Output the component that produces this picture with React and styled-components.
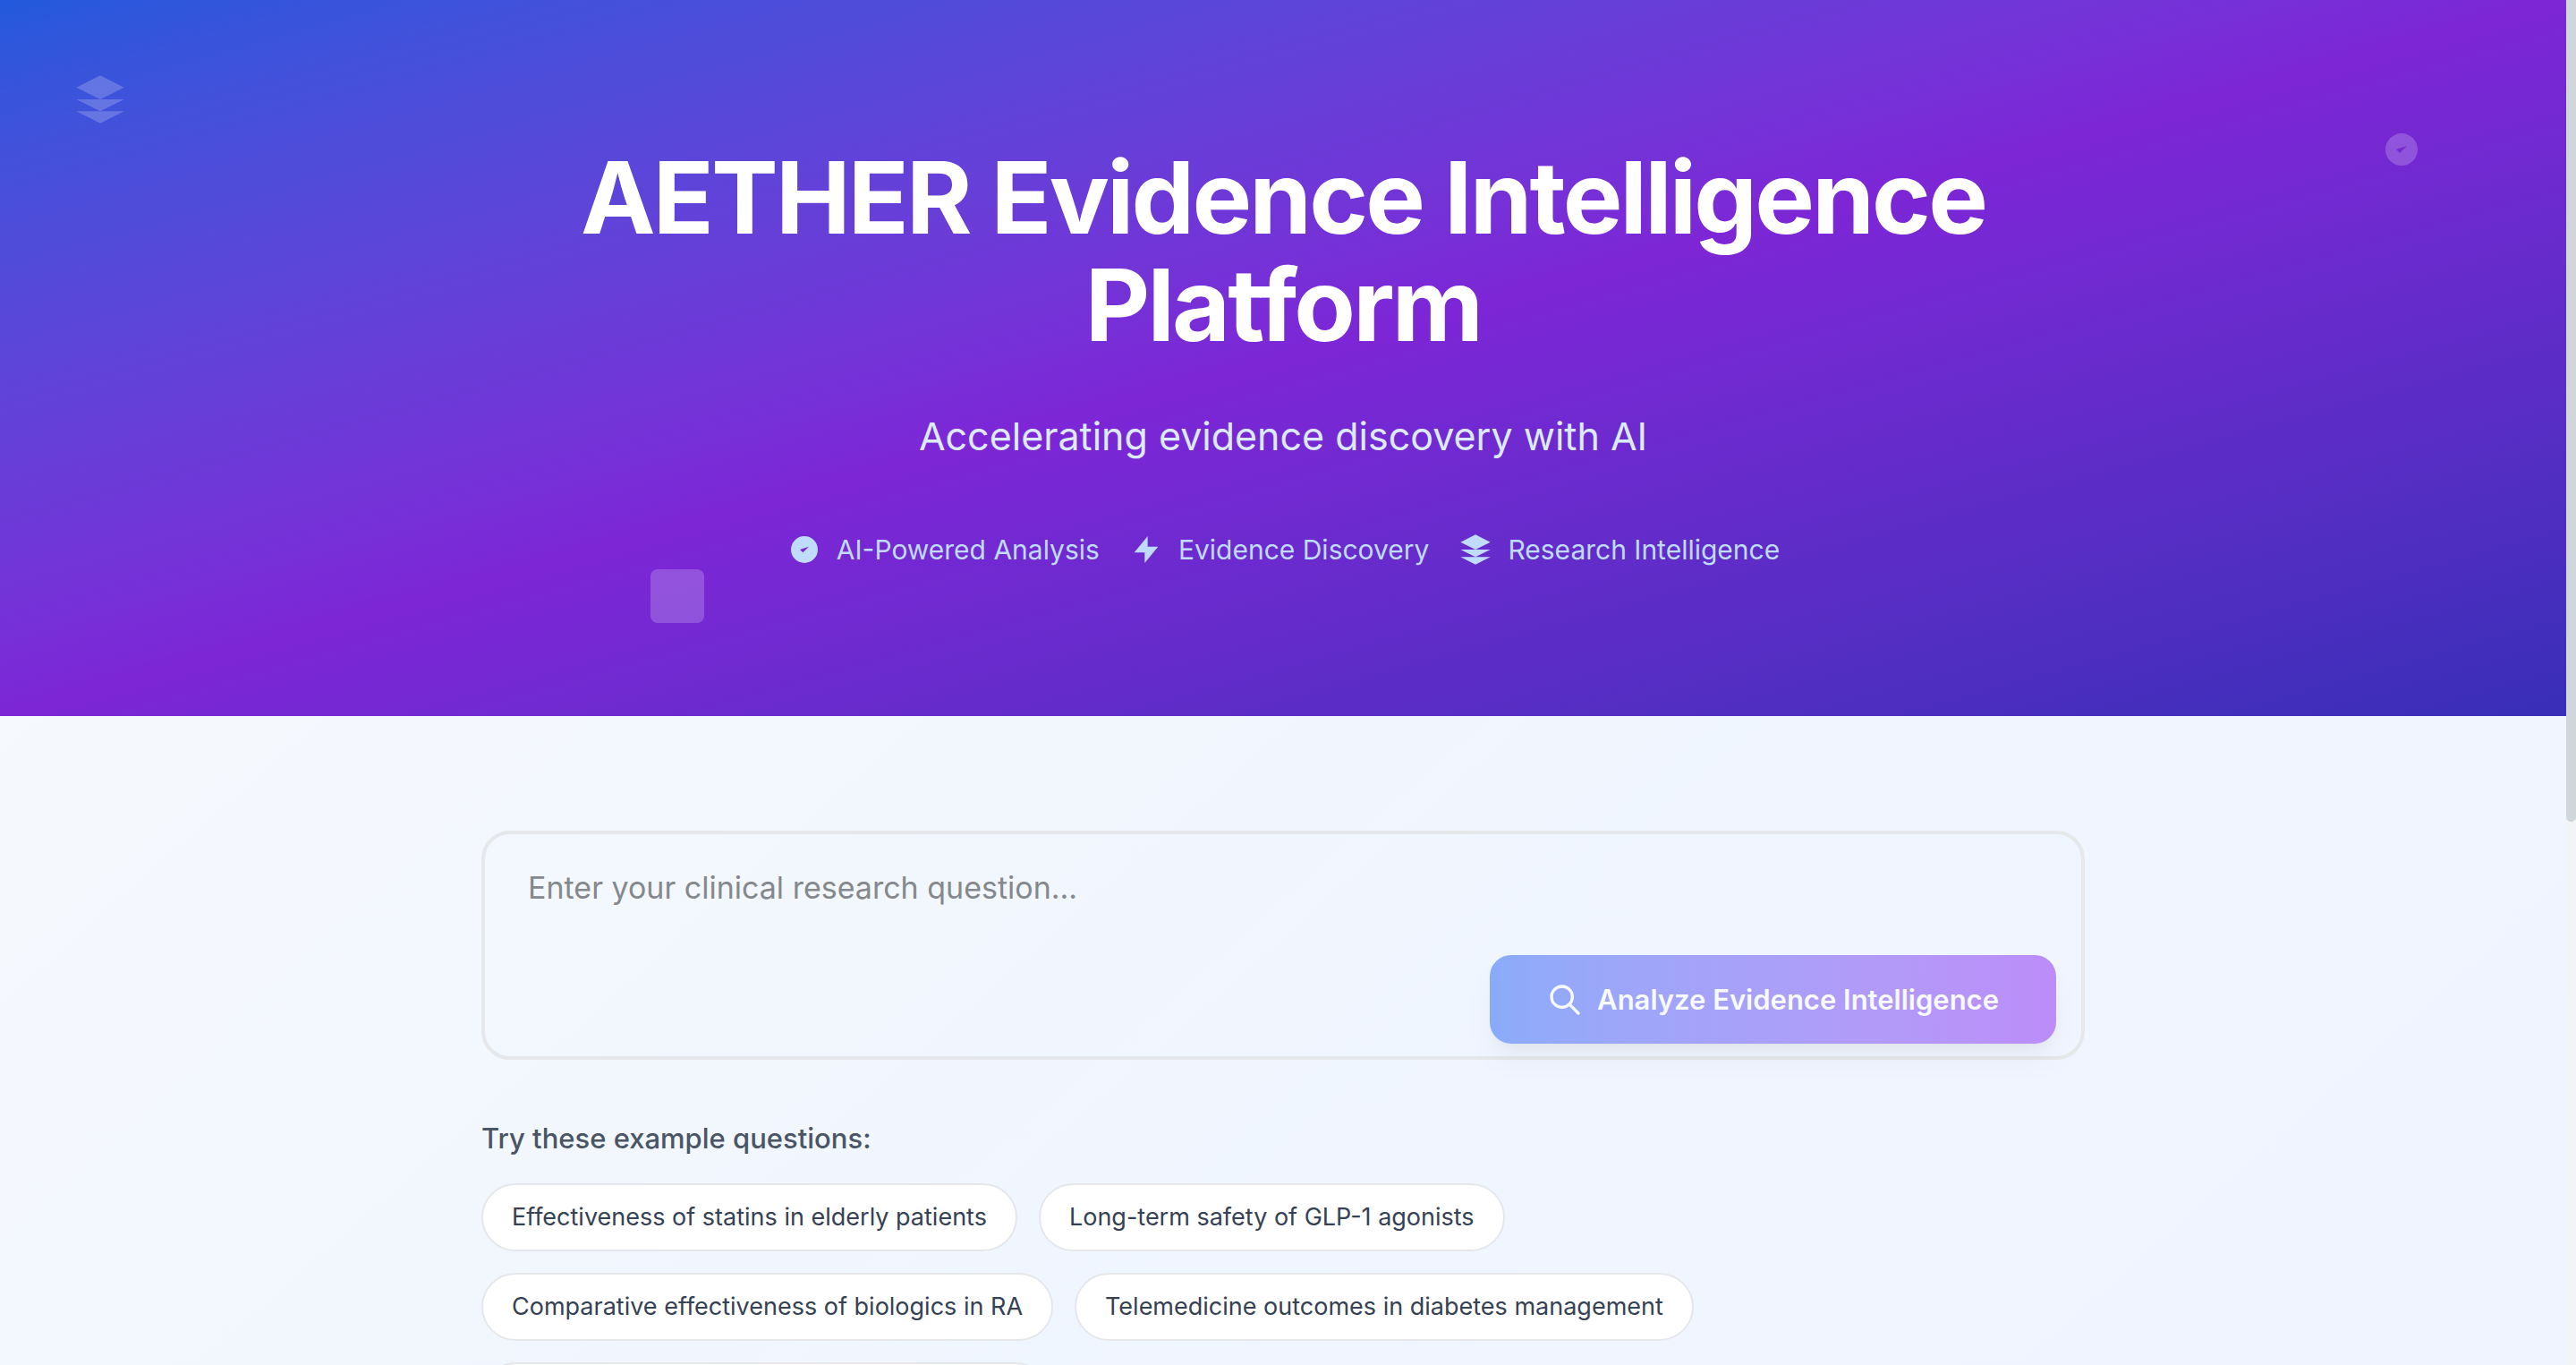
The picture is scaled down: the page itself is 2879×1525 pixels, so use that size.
import React, { useState } from 'react';
import styled, { createGlobalStyle } from 'styled-components';

const GlobalStyle = createGlobalStyle`
  * { box-sizing: border-box; }
  body {
    margin: 0;
    font-family: Inter, "Noto Sans", sans-serif;
    -webkit-font-smoothing: antialiased;
  }
`;

const Shell = styled.div`
  display: flex;
  height: 100vh;
  overflow: hidden;
`;

const Viewport = styled.div`
  flex: 1;
  min-width: 0;
  overflow-y: auto;
  scrollbar-width: none;
`;

const ScrollTrack = styled.div`
  width: 11px;
  background: #f3f4f6;
`;

const ScrollThumb = styled.div`
  height: 60.2%;
  border-radius: 0 0 6px 6px;
  background: #d1d5dc;
`;

const Page = styled.div`
  min-height: 166vh;
  background: linear-gradient(to bottom right in oklab, #f8fafc, #f0f6ff, #f0f3ff);
`;

const Hero = styled.header`
  position: relative;
  padding: 160px 48px 162px;
  background: linear-gradient(to bottom right in oklab, #2159dc, #7d26d6, #382eb8);
  text-align: center;
`;

const HeroContent = styled.div`
  max-width: 1792px;
  margin: 0 auto;
`;

const Title = styled.h1`
  margin: 0 0 48px;
  color: #fff;
  font-size: 112px;
  font-weight: 700;
  line-height: 120px;
  letter-spacing: -0.025em;
`;

const Subtitle = styled.p`
  margin: 0 0 64px;
  color: #dbeafe;
  font-size: 43px;
  font-weight: 400;
  line-height: 78px;
`;

const Features = styled.ul`
  display: flex;
  flex-wrap: wrap;
  justify-content: center;
  gap: 32px;
  margin: 0;
  padding: 0;
  list-style: none;
`;

const Feature = styled.li`
  display: flex;
  align-items: center;
  gap: 16px;
  color: #bfdbfe;
  font-size: 30px;
  line-height: 48px;
`;

const Glyph = styled.svg`
  display: block;
  flex: none;
  width: ${(p) => p.$size}px;
  height: ${(p) => p.$size}px;
`;

const Ornament = styled.div`
  position: absolute;
  color: #fff;
  opacity: 0.2;
  top: ${(p) => p.$top || 'auto'};
  bottom: ${(p) => p.$bottom || 'auto'};
  left: ${(p) => p.$left || 'auto'};
  right: ${(p) => p.$right || 'auto'};
`;

const Tile = styled.div`
  width: 60px;
  height: 60px;
  border-radius: 8px;
  background: #fff;
`;

const Main = styled.main`
  max-width: 1888px;
  margin: 0 auto;
  padding: 128px 48px;
`;

const SearchForm = styled.form`
  position: relative;
  margin-bottom: 64px;
`;

const Question = styled.textarea`
  display: block;
  width: 100%;
  height: 256px;
  padding: 32px 48px;
  border: 4px solid #e5e7eb;
  border-radius: 32px;
  background: transparent;
  color: #1f2937;
  font-family: inherit;
  font-size: 34px;
  line-height: 56px;
  resize: none;
  outline: none;
  &::placeholder { color: #85888c; opacity: 1; }
`;

const AnalyzeButton = styled.button`
  position: absolute;
  right: 32px;
  bottom: 18px;
  display: flex;
  align-items: center;
  gap: 16px;
  height: 99px;
  padding: 0 64px;
  border: 0;
  border-radius: 24px;
  background: linear-gradient(to right in oklab, #2563f5, #8a26f2);
  box-shadow: 0 20px 30px -6px rgba(0, 0, 0, 0.1), 0 8px 12px -8px rgba(0, 0, 0, 0.1);
  color: #fff;
  font-family: inherit;
  font-size: 31px;
  font-weight: 600;
  line-height: 48px;
  opacity: 0.5;
`;

const ButtonText = styled.span`
  white-space: nowrap;
`;

const ExamplesTitle = styled.h2`
  margin: 0 0 26px;
  color: #4a5565;
  font-size: 31px;
  font-weight: 500;
  line-height: 48px;
`;

const Chips = styled.div`
  display: flex;
  flex-wrap: wrap;
  gap: 24px;
  max-width: 1536px;
`;

const Chip = styled.button`
  padding: 16px 32px;
  border: 2px solid #e5e7eb;
  border-radius: 38px;
  background: #fff;
  color: #364153;
  font-family: inherit;
  font-size: 27px;
  line-height: 40px;
`;

const shapes = {
  check: 'M9 12l2 2 4-4m6 2a9 9 0 11-18 0 9 9 0 0118 0z',
  bolt: 'M13 10V3L4 14h7v7l9-11h-7z',
  layers: 'M12 2L2 7l10 5 10-5-10-5zM2 17l10 5 10-5M2 12l10 5 10-5',
};

function Shape({ name, size }) {
  return (
    <Glyph $size={size} viewBox="0 0 24 24" fill="currentColor" aria-hidden="true">
      <path d={shapes[name]} />
    </Glyph>
  );
}

const features = [
  ['check', 'AI-Powered Analysis'],
  ['bolt', 'Evidence Discovery'],
  ['layers', 'Research Intelligence'],
];

const examples = [
  'Effectiveness of statins in elderly patients',
  'Long-term safety of GLP-1 agonists',
  'Comparative effectiveness of biologics in RA',
  'Telemedicine outcomes in diabetes management',
  'Immunotherapy response rates in melanoma',
];

export default function App() {
  const [question, setQuestion] = useState('');
  return (
    <Shell>
      <GlobalStyle />
      <Viewport>
        <Page>
          <Hero>
            <Ornament $top="79px" $left="80px"><Shape name="layers" size={64} /></Ornament>
            <Ornament $top="143px" $right="160px"><Shape name="check" size={48} /></Ornament>
            <Ornament $bottom="104px" $left="727px"><Tile /></Ornament>
            <HeroContent>
              <Title>AETHER Evidence Intelligence Platform</Title>
              <Subtitle>Accelerating evidence discovery with AI</Subtitle>
              <Features>
                {features.map(([icon, label]) => (
                  <Feature key={label}>
                    <Shape name={icon} size={40} />
                    <span>{label}</span>
                  </Feature>
                ))}
              </Features>
            </HeroContent>
          </Hero>
          <Main>
            <SearchForm onSubmit={(e) => e.preventDefault()}>
              <Question
                aria-label="Clinical research question"
                placeholder="Enter your clinical research question..."
                value={question}
                onChange={(e) => setQuestion(e.target.value)}
              />
              <AnalyzeButton type="submit">
                <Glyph $size={40} viewBox="0 0 24 24" fill="none" stroke="currentColor" strokeWidth="2" strokeLinecap="round" strokeLinejoin="round" aria-hidden="true">
                  <path d="M21 21l-6-6m2-5a7 7 0 11-14 0 7 7 0 0114 0z" />
                </Glyph>
                <ButtonText>Analyze Evidence Intelligence</ButtonText>
              </AnalyzeButton>
            </SearchForm>
            <ExamplesTitle>Try these example questions:</ExamplesTitle>
            <Chips>
              {examples.map((text) => (
                <Chip key={text} type="button" onClick={() => setQuestion(text)}>{text}</Chip>
              ))}
            </Chips>
          </Main>
        </Page>
      </Viewport>
      <ScrollTrack><ScrollThumb /></ScrollTrack>
    </Shell>
  );
}
